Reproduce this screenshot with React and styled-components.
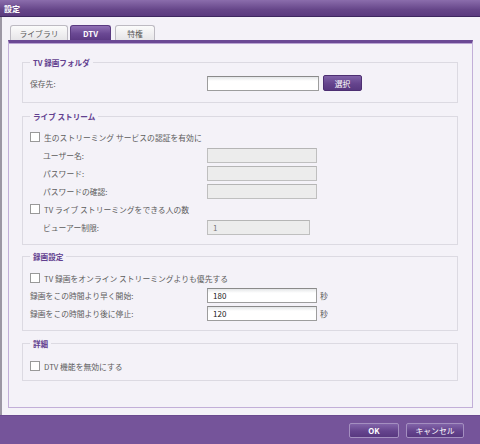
import React from "react";
import styled, { createGlobalStyle } from "styled-components";

const Global = createGlobalStyle`
  html, body { margin: 0; padding: 0; }
  body {
    width: 480px; height: 444px; overflow: hidden;
    font-family: "Noto Sans CJK JP", "Liberation Sans", sans-serif;
    background: #f4f2f8;
  }
  * { box-sizing: border-box; }
`;

const Window = styled.div`
  width: 480px; height: 444px;
  display: flex; flex-direction: column;
`;

const TitleBar = styled.div`
  height: 17px; flex: none;
  background: linear-gradient(#8b6dac, #664689 60%, #5b3b7f);
  border-bottom: 1px solid #3e2860;
  color: #fff; font-size: 8px; font-weight: bold;
  display: flex; align-items: center; padding-left: 4px;
`;

const Body = styled.div`
  flex: 1;
  display: flex; flex-direction: column;
  padding: 8px 7px 7px 6px;
  border-left: 2px solid #9c97a4;
  background: #f4f2f8;
`;

const Tabs = styled.div`
  display: flex; align-items: flex-end; height: 15px; padding-left: 2px;
`;

const Tab = styled.div`
  height: 15px; width: ${p => p.$w}px; margin-right: ${p => p.$mr || 0}px;
  border-radius: 3px 3px 0 0;
  display: flex; align-items: center; justify-content: center;
  font-size: 7.8px;
  ${p => p.$active ? `
    background: linear-gradient(#9070b4, #6a4893 55%, #5c3a84);
    color: #fff; font-weight: bold; border: 1px solid #5a3a80; border-bottom: none;
  ` : `
    background: linear-gradient(#fbfbfb, #e6e5e8);
    color: #5a5a5a; border: 1px solid #bdbac2; border-bottom: none;
  `}
`;

const Panel = styled.div`
  flex: 1;
  border: 1px solid #c2afd8;
  border-top: 3px solid #6b4994;
  box-shadow: inset 0 1px 0 #b9a3d3;
  padding: 19px 14px 0 13px;
  display: flex; flex-direction: column;
`;

const Group = styled.div`
  position: relative;
  border: 1px solid #dcdae2;
  margin-top: ${p => p.$mt || 0}px;
  padding: ${p => p.$pt}px 7px ${p => p.$pb}px 7px;
`;

const GroupTitle = styled.span`
  position: absolute; top: -6px; left: 7px;
  padding: 0 3px; background: #f4f2f8;
  font-size: 7.6px; font-weight: bold; color: #62408f; line-height: 11px;
`;

const Row = styled.div`
  height: ${p => p.$h || 18}px;
  display: flex; align-items: center;
  font-size: 7.8px; color: #5c5c5c;
`;

const Label = styled.span`
  width: ${p => p.$indent ? 164 : 177}px;
  margin-left: ${p => p.$indent ? 13 : 0}px;
  flex: none;
`;

const Input = styled.div`
  width: ${p => p.$w}px; height: 15px;
  border: 1px solid ${p => p.$disabled ? "#bfbfbf" : "#9d9d9d"};
  border-top-color: ${p => p.$disabled ? "#b5b5b5" : "#8a8a8a"};
  background: ${p => p.$disabled ? "#ececec" : "linear-gradient(#e4e6e8, #ffffff 4px)"};
  font-size: 8px; color: ${p => p.$disabled ? "#777" : "#222"};
  display: flex; align-items: center; padding-left: 5px;
`;

const PurpleButton = styled.div`
  width: ${p => p.$w}px; height: ${p => p.$h}px;
  margin-left: ${p => p.$ml || 0}px;
  border-radius: 2px;
  border: 1px solid ${p => p.$light ? "#a48fc0" : "#4d2f72"};
  background: linear-gradient(#8163a8, #65448d 55%, #583880);
  color: #fff; font-size: 7.8px; font-weight: ${p => p.$bold ? "bold" : "normal"};
  display: flex; align-items: center; justify-content: center;
`;

const Box = styled.span`
  width: 10px; height: 10px; flex: none;
  border: 1px solid #999; background: #fff;
  margin-right: 4px;
`;

const Unit = styled.span`
  margin-left: 3px; color: #555;
`;

const Footer = styled.div`
  height: 29px; flex: none;
  background: #75549a;
  border-top: 1px solid #6a4a8f;
  display: flex; align-items: center; justify-content: flex-end;
  padding: 1px 16px 0 0;
`;

export default function App() {
  return (
    <Window>
      <Global />
      <TitleBar>設定</TitleBar>
      <Body>
        <Tabs>
          <Tab $w={58} $mr={2}>ライブラリ</Tab>
          <Tab $w={41} $mr={4} $active>DTV</Tab>
          <Tab $w={40}>特権</Tab>
        </Tabs>
        <Panel>
          <Group $pt={11} $pb={10}>
            <GroupTitle>TV 録画フォルダ</GroupTitle>
            <Row>
              <Label>保存先:</Label>
              <Input $w={112} />
              <PurpleButton $w={39} $h={16} $ml={4}>選択</PurpleButton>
            </Row>
          </Group>

          <Group $mt={13} $pt={11} $pb={8}>
            <GroupTitle>ライブ ストリーム</GroupTitle>
            <Row><Box />生のストリーミング サービスの認証を有効に</Row>
            <Row><Label $indent>ユーザー名:</Label><Input $w={110} $disabled /></Row>
            <Row><Label $indent>パスワード:</Label><Input $w={110} $disabled /></Row>
            <Row><Label $indent>パスワードの確認:</Label><Input $w={110} $disabled /></Row>
            <Row><Box />TV ライブ ストリーミングをできる人の数</Row>
            <Row><Label $indent>ビューアー制限:</Label><Input $w={103} $disabled>1</Input></Row>
          </Group>

          <Group $mt={11} $pt={13} $pb={8}>
            <GroupTitle>録画設定</GroupTitle>
            <Row $h={16}><Box />TV 録画をオンライン ストリーミングよりも優先する</Row>
            <Row><Label>録画をこの時間より早く開始:</Label><Input $w={110}>180</Input><Unit>秒</Unit></Row>
            <Row><Label>録画をこの時間より後に停止:</Label><Input $w={110}>120</Input><Unit>秒</Unit></Row>
          </Group>

          <Group $mt={12} $pt={13} $pb={5}>
            <GroupTitle>詳細</GroupTitle>
            <Row><Box />DTV 機能を無効にする</Row>
          </Group>
        </Panel>
      </Body>
      <Footer>
        <PurpleButton $w={50} $h={15} $light $bold>OK</PurpleButton>
        <PurpleButton $w={58} $h={15} $ml={7} $light>キャンセル</PurpleButton>
      </Footer>
    </Window>
  );
}
